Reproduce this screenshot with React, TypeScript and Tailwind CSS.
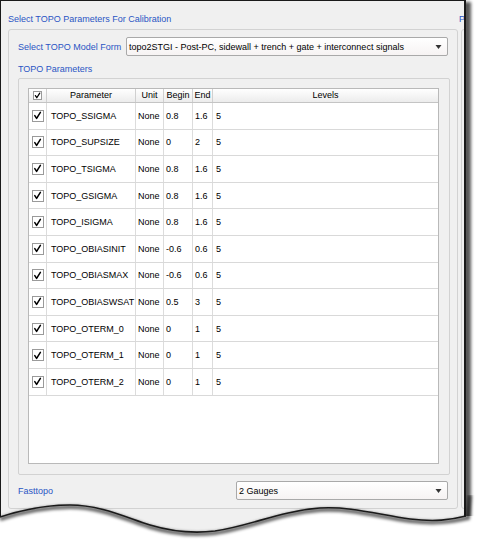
import React from "react";

type Row = { name: string; unit: string; begin: string; end: string; levels: string };

const rows: Row[] = [
  { name: "TOPO_SSIGMA", unit: "None", begin: "0.8", end: "1.6", levels: "5" },
  { name: "TOPO_SUPSIZE", unit: "None", begin: "0", end: "2", levels: "5" },
  { name: "TOPO_TSIGMA", unit: "None", begin: "0.8", end: "1.6", levels: "5" },
  { name: "TOPO_GSIGMA", unit: "None", begin: "0.8", end: "1.6", levels: "5" },
  { name: "TOPO_ISIGMA", unit: "None", begin: "0.8", end: "1.6", levels: "5" },
  { name: "TOPO_OBIASINIT", unit: "None", begin: "-0.6", end: "0.6", levels: "5" },
  { name: "TOPO_OBIASMAX", unit: "None", begin: "-0.6", end: "0.6", levels: "5" },
  { name: "TOPO_OBIASWSAT", unit: "None", begin: "0.5", end: "3", levels: "5" },
  { name: "TOPO_OTERM_0", unit: "None", begin: "0", end: "1", levels: "5" },
  { name: "TOPO_OTERM_1", unit: "None", begin: "0", end: "1", levels: "5" },
  { name: "TOPO_OTERM_2", unit: "None", begin: "0", end: "1", levels: "5" },
];

const cols = "grid grid-cols-[18px_89px_28px_29px_20px_1fr]";

function CheckBox({ small }: { small?: boolean }) {
  const size = small ? "w-[9px] h-[9px]" : "w-[12px] h-[12px]";
  return (
    <div className={`${size} bg-white border border-[#9a9a9a] flex items-center justify-center`}>
      <svg viewBox="0 0 10 10" className={small ? "w-[7px] h-[7px]" : "w-[9px] h-[9px]"}>
        <path d="M2 5.2 L4 8.2 L8.2 1.5" fill="none" stroke="#000" strokeWidth={small ? 1.8 : 1.7} strokeLinecap="round" strokeLinejoin="round" />
      </svg>
    </div>
  );
}

function Dropdown({ value, width }: { value: string; width: string }) {
  return (
    <div className={`${width} h-[19px] flex items-center justify-between pl-[2px] pr-[5px] rounded-[2px] border border-[#a9a9a9] bg-gradient-to-b from-white to-[#f6f3f3] text-black`}>
      <span>{value}</span>
      <svg viewBox="0 0 6 4" className="w-[7px] h-[4px]">
        <path d="M0 0 L6 0 L3 4 Z" fill="#333" />
      </svg>
    </div>
  );
}

export default function App() {
  return (
    <div className="relative w-[480px] h-[547px] bg-white overflow-hidden font-['Liberation_Sans',Arial,sans-serif] text-[9px] leading-[12px]">
      <div className="w-[466px] h-[547px] bg-[#f0f0f0] border-l border-t border-r-2 border-[#1a1a1a] shadow-[5px_2px_3px_rgba(0,0,0,0.65)] overflow-hidden flex gap-[1px] pl-[7px]">
        <div className="w-[450px] shrink-0 flex flex-col pt-[12px]">
          <div className="text-[#2a55c4] h-[12px]">Select TOPO Parameters For Calibration</div>
          <div className="mt-[4px] h-[480px] border border-[#d2d2d2] rounded-[3px] flex flex-col pl-[9px] pt-[7px]">
            <div className="flex items-center h-[19px]">
              <div className="w-[108px] text-[#2a55c4]">Select TOPO Model Form</div>
              <Dropdown width="w-[322px]" value="topo2STGI - Post-PC, sidewall + trench + gate + interconnect signals" />
            </div>
            <div className="mt-[7px] h-[12px] text-[#2a55c4]">TOPO Parameters</div>
            <div className="mt-[3px] w-[432px] h-[397px] border border-[#d2d2d2] rounded-[2px] pl-[9px] pt-[9px]">
              <div className="w-[411px] h-[376px] bg-white border border-[#b9b9b9]">
                <div className={`${cols} h-[14px] bg-gradient-to-b from-white to-[#ececec] border-b border-[#c4c4c4]`}>
                  <div className="flex items-center justify-center border-r border-[#d0d0d0]">
                    <CheckBox small />
                  </div>
                  <div className="text-center border-r border-[#d0d0d0] leading-[13px]">Parameter</div>
                  <div className="text-center border-r border-[#d0d0d0] leading-[13px]">Unit</div>
                  <div className="text-center border-r border-[#d0d0d0] leading-[13px]">Begin</div>
                  <div className="text-center border-r border-[#d0d0d0] leading-[13px]">End</div>
                  <div className="text-center leading-[13px]">Levels</div>
                </div>
                {rows.map((r) => (
                  <div key={r.name} className={`${cols} h-[26.6px] border-b border-[#d9d9d9]`}>
                    <div className="flex items-center justify-center border-r border-[#dcdcdc]">
                      <CheckBox />
                    </div>
                    <div className="flex items-center pl-[4px] border-r border-[#dcdcdc]">{r.name}</div>
                    <div className="flex items-center pl-[2px] border-r border-[#dcdcdc]">{r.unit}</div>
                    <div className="flex items-center pl-[2px] border-r border-[#dcdcdc]">{r.begin}</div>
                    <div className="flex items-center pl-[2px] border-r border-[#dcdcdc]">{r.end}</div>
                    <div className="flex items-center pl-[3px]">{r.levels}</div>
                  </div>
                ))}
              </div>
            </div>
            <div className="mt-[6px] flex items-center h-[19px]">
              <div className="w-[218px] text-[#2a55c4]">Fasttopo</div>
              <Dropdown width="w-[212px]" value="2 Gauges" />
            </div>
          </div>
        </div>
        <div className="w-[40px] shrink-0 flex flex-col pt-[12px]">
          <div className="text-[#2a55c4] h-[12px]">P</div>
          <div className="mt-[4px] ml-[2px] h-[480px] border border-[#d2d2d2] rounded-[3px]" />
        </div>
      </div>
      <svg className="absolute left-0 bottom-0" width="480" height="52" viewBox="0 0 480 52">
        <defs>
          <filter id="blur" x="-5%" y="-50%" width="110%" height="200%">
            <feGaussianBlur stdDeviation="1.6" />
          </filter>
        </defs>
        <path
          d="M0,22 C25,14 45,10 70,10 C100,10 125,22 150,30 C170,36 190,39 215,36 C250,31 280,16 320,13 C350,11 380,20 410,24 C435,27 450,25 466,21 L480,21 L480,52 L0,52 Z"
          fill="#fff"
        />
        <path
          d="M0,24 C25,16 45,12 70,12 C100,12 125,24 150,32 C170,38 190,41 215,38 C250,33 280,18 320,15 C350,13 380,22 410,26 C435,29 450,27 468,23 L470,0"
          fill="none"
          stroke="rgba(0,0,0,0.6)"
          strokeWidth="4"
          filter="url(#blur)"
        />
        <path
          d="M0,22 C25,14 45,10 70,10 C100,10 125,22 150,30 C170,36 190,39 215,36 C250,31 280,16 320,13 C350,11 380,20 410,24 C435,27 450,25 466,21"
          fill="none"
          stroke="#1a1a1a"
          strokeWidth="1.6"
        />
      </svg>
    </div>
  );
}
